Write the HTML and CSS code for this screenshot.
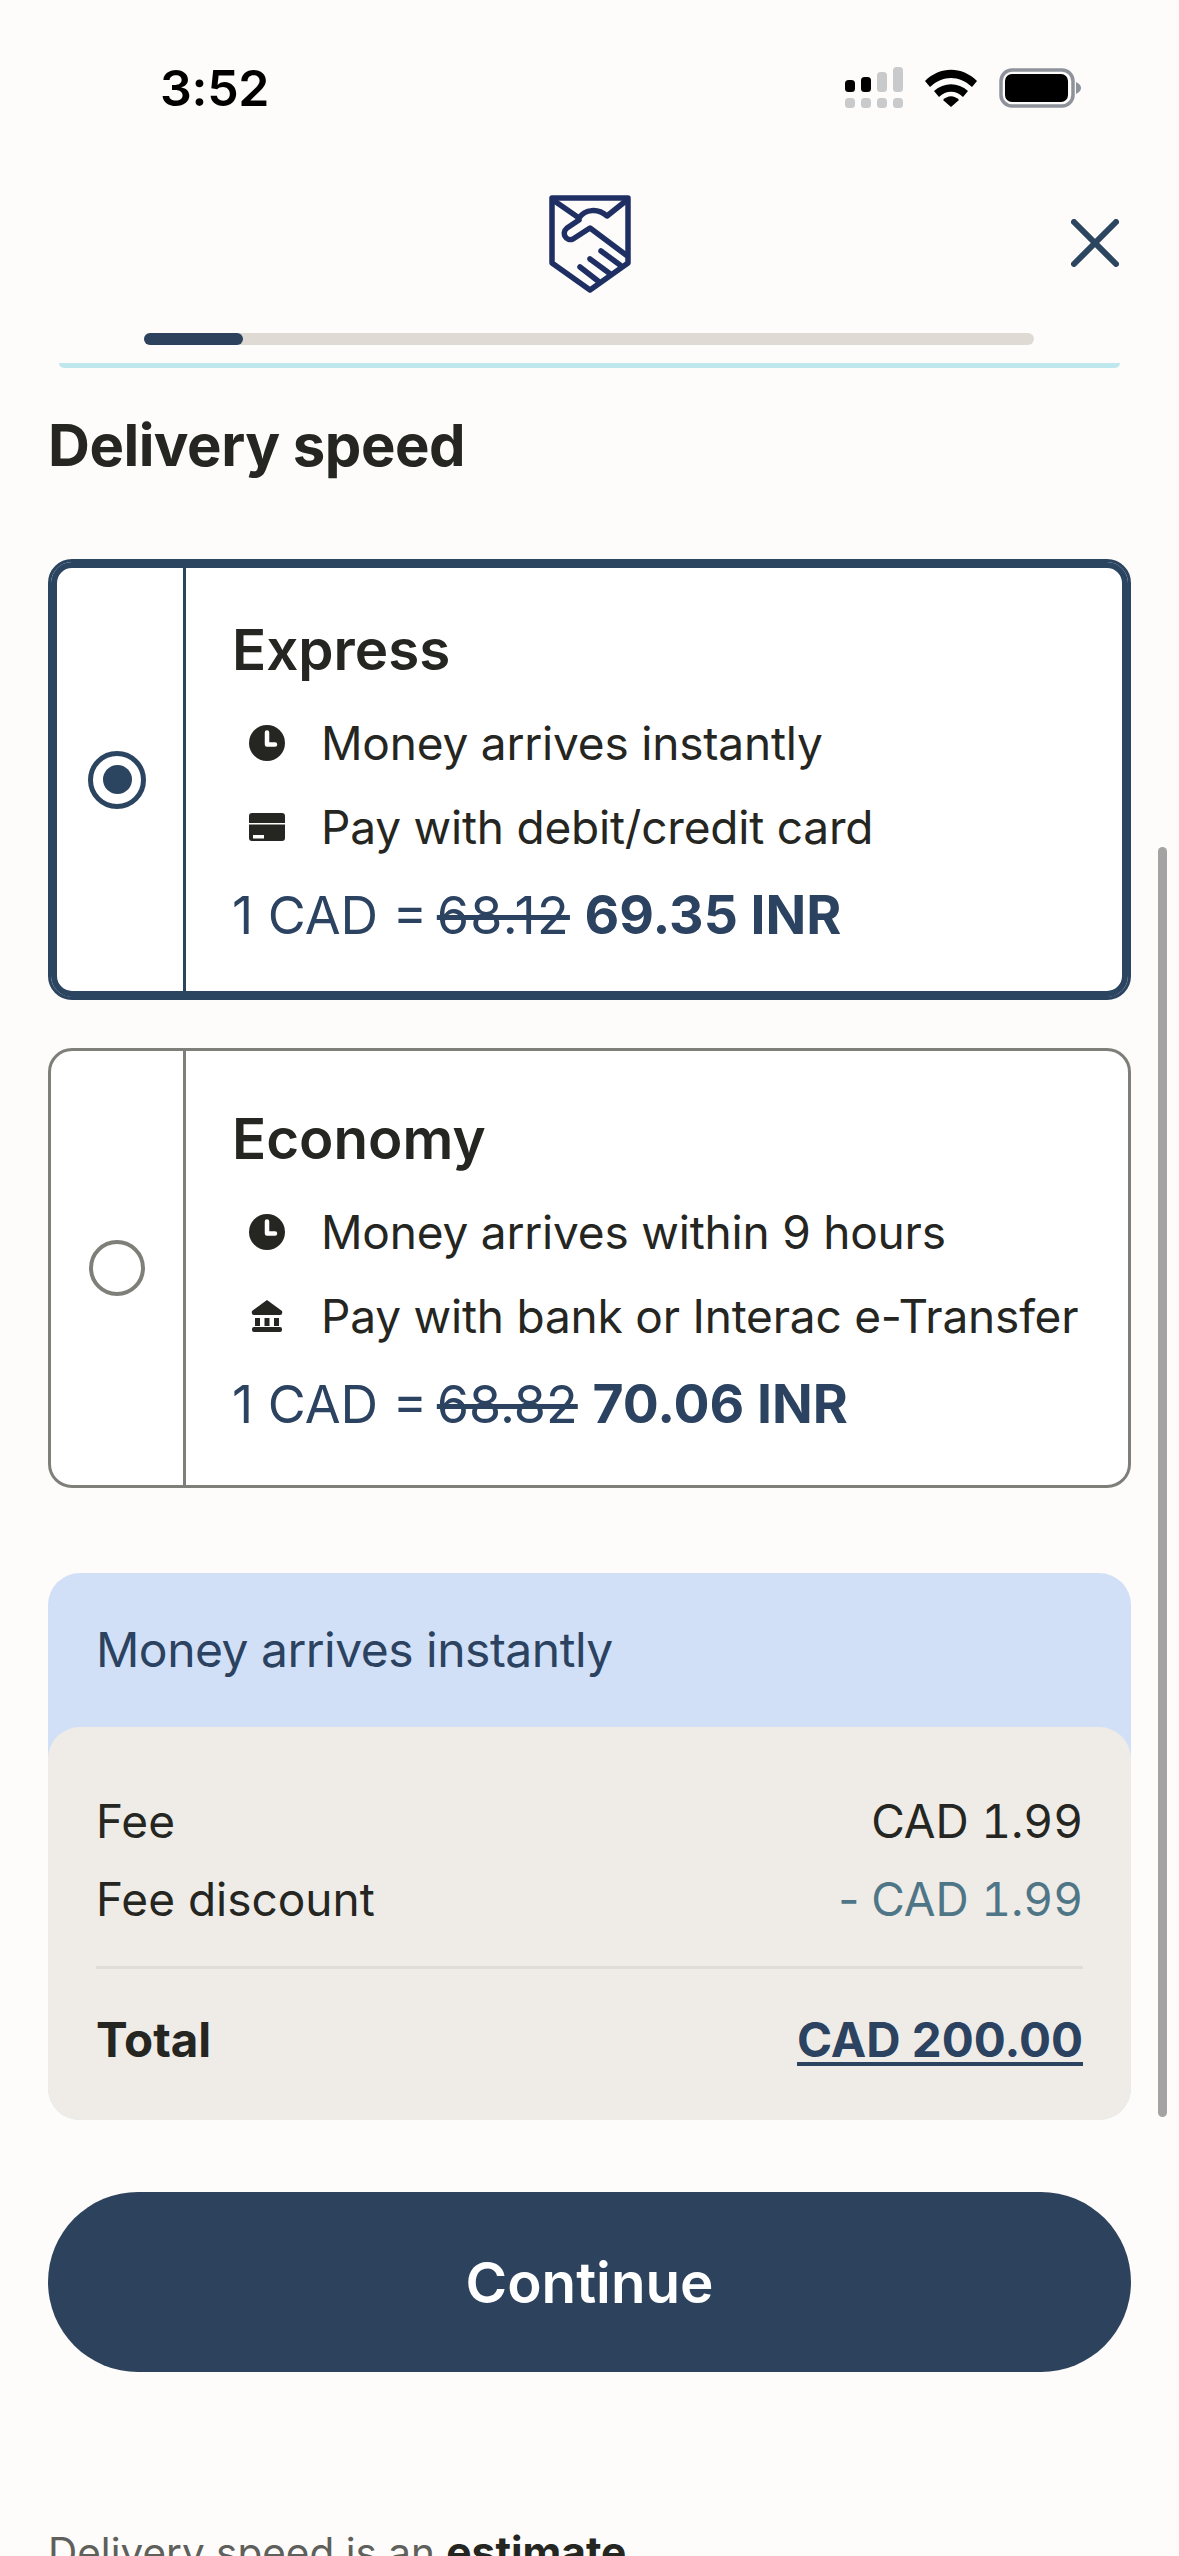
FILE: index.html
```html
<!DOCTYPE html>
<html lang="en">
<head>
    <meta charset="UTF-8">
    <meta name="viewport" content="width=device-width, initial-scale=1.0">
    <title>Delivery speed</title>
    <link rel="stylesheet" href="styles.css">
</head>

<body>
    <div class="scrollbar"></div>

    <header class="status-bar">
        <span class="time">3:52</span>
        <div class="status-icons">
            <svg width="58" height="41" viewBox="0 0 58 41">
                <rect x="0" y="13" width="10" height="12" rx="3.5" fill="#000"/>
                <rect x="16" y="10" width="10" height="15" rx="3.5" fill="#000"/>
                <rect x="32" y="5" width="10" height="20" rx="3.5" fill="#c9cacc"/>
                <rect x="48" y="0" width="10" height="25" rx="3.5" fill="#c9cacc"/>
                <rect x="0" y="31" width="10" height="10" rx="3.5" fill="#c9cacc"/>
                <rect x="16" y="31" width="10" height="10" rx="3.5" fill="#c9cacc"/>
                <rect x="32" y="31" width="10" height="10" rx="3.5" fill="#c9cacc"/>
                <rect x="48" y="31" width="10" height="10" rx="3.5" fill="#c9cacc"/>
            </svg>
            <svg width="52" height="38" viewBox="0 0 52 38">
                <path d="M0 12 C15 -3 37 -3 52 12 L47 18 C34 6 18 6 5 18 Z" fill="#000"/>
                <path d="M9 22 C19 13 33 13 43 22 L38 28 C31 21 21 21 14 28 Z" fill="#000"/>
                <path d="M18 31 C23 26 29 26 34 31 L26 38 Z" fill="#000"/>
            </svg>
            <svg class="battery" width="82" height="40" viewBox="0 0 82 40">
                <rect x="2" y="2" width="72" height="36" rx="11" fill="none" stroke="#8e939b" stroke-width="3.5"/>
                <rect x="6" y="6" width="63" height="28" rx="7" fill="#000"/>
                <path d="M77 14 C81 16 82 18 82 20 C82 22 81 24 77 26 Z" fill="#8e939b"/>
            </svg>
        </div>
    </header>

    <div class="top-nav">
        <svg class="logo" width="82" height="98" viewBox="-1 -1 82 98">
            <g fill="none" stroke="#1f2f63" stroke-width="5.5" stroke-linecap="round" stroke-linejoin="round">
                <path d="M2 2 H78 V67 L40 94 L2 67 Z"/>
                <path d="M3 4 L29 22 C35 13 48 12 57 20 L77 4"/>
                <path d="M29 24 L17 32 C11 37 16 46 23 43 L40 32 L76 59"/>
                <path d="M51 55 L70 69"/>
                <path d="M40 63 L59 77"/>
                <path d="M30 71 L48 85"/>
            </g>
        </svg>
        <svg class="close" width="48" height="48" viewBox="0 0 48 48">
            <path d="M3 3 L45 45 M45 3 L3 45" fill="none" stroke="#2d4660" stroke-width="6" stroke-linecap="round"/>
        </svg>
    </div>

    <div class="progress"><div class="progress-fill"></div></div>
    <div class="prev-card-edge"></div>

    <main class="content">
        <h1>Delivery speed</h1>

        <div class="speed-card selected">
            <div class="radio-col"><span class="radio"></span></div>
            <div class="speed-info">
                <h2>Express</h2>
                <div class="info-row">
                    <svg width="36" height="36" viewBox="0 0 36 36"><circle cx="18" cy="18" r="18" fill="#252622"/><path d="M18 7.500 V19.500 H26" fill="none" stroke="#fff" stroke-width="4.500" stroke-linecap="round" stroke-linejoin="round"/></svg>
                    <span>Money arrives instantly</span>
                </div>
                <div class="info-row">
                    <svg width="36" height="36" viewBox="0 0 36 36"><path d="M3 4 H33 A3 3 0 0 1 36 7 V14 H0 V7 A3 3 0 0 1 3 4 Z M0 15.500 H36 V29 A3 3 0 0 1 33 32 H3 A3 3 0 0 1 0 29 Z" fill="#252622"/><rect x="4" y="26" width="11" height="3.500" fill="#fff"/></svg>
                    <span>Pay with debit/credit card</span>
                </div>
                <p class="rate">1 CAD = <s>68.12</s> <b>69.35 INR</b></p>
            </div>
        </div>

        <div class="speed-card">
            <div class="radio-col"><span class="radio"></span></div>
            <div class="speed-info">
                <h2>Economy</h2>
                <div class="info-row">
                    <svg width="36" height="36" viewBox="0 0 36 36"><circle cx="18" cy="18" r="18" fill="#252622"/><path d="M18 7.500 V19.500 H26" fill="none" stroke="#fff" stroke-width="4.500" stroke-linecap="round" stroke-linejoin="round"/></svg>
                    <span>Money arrives within 9 hours</span>
                </div>
                <div class="info-row">
                    <svg width="36" height="36" viewBox="0 0 36 36"><path d="M18 2 L33 13 Q34 17 31 17 H5 Q2 17 3 13 Z" fill="#252622"/><path d="M6 20 H11 V28 H6 Z M15.500 20 H20.500 V28 H15.500 Z M25 20 H30 V28 H25 Z" fill="#252622"/><rect x="3" y="29" width="30" height="5" rx="2" fill="#252622"/></svg>
                    <span>Pay with bank or Interac e-Transfer</span>
                </div>
                <p class="rate">1 CAD = <s>68.82</s> <b>70.06 INR</b></p>
            </div>
        </div>

        <section class="summary">
            <div class="summary-note">Money arrives instantly</div>
            <div class="summary-body">
                <div class="fee-row"><span>Fee</span><span class="amount">CAD 1.99</span></div>
                <div class="fee-row"><span>Fee discount</span><span class="amount discount"><span class="minus">-</span> CAD 1.99</span></div>
                <div class="total-row"><span>Total</span><a class="total-amount">CAD 200.00</a></div>
            </div>
        </section>

        <button class="btn">Continue</button>

        <p class="footnote">Delivery speed is an <b>estimate</b></p>
    </main>
</body>
</html>
```

FILE: styles.css
```css
* {
    box-sizing: border-box;
}

html, body {
    height: 2556px;
    overflow: hidden;
}

body {
    font-family: 'Inter', 'Liberation Sans', sans-serif;
    margin: 0;
    padding: 0;
    background-color: #fdfcfa;
    color: #252622;
    position: relative;
}

.scrollbar {
    position: absolute;
    top: 847px;
    right: 12px;
    width: 9px;
    height: 1270px;
    border-radius: 5px;
    background: #a3a3a3;
}

.status-bar {
    height: 195px;
    padding: 60px 98px 0 160px;
    display: flex;
    justify-content: space-between;
    align-items: flex-start;
}

.time {
    font-size: 50px;
    font-weight: 600;
    letter-spacing: -0.3px;
    line-height: 56px;
    color: #000;
}

.status-icons {
    display: flex;
    align-items: center;
    gap: 22px;
    padding-top: 7px;
}

.top-nav {
    height: 96px;
    position: relative;
    display: flex;
    justify-content: center;
}

.close {
    position: absolute;
    right: 60px;
    top: 24px;
}

.progress {
    margin: 42px 145px 0 144px;
    height: 12px;
    border-radius: 6px;
    background: #dfdbd4;
}

.progress-fill {
    width: 99px;
    height: 12px;
    border-radius: 6px;
    background: #2d425c;
}

.prev-card-edge {
    margin: 18px 59px 0;
    height: 5px;
    background: #bfe8ee;
    border-radius: 0 0 10px 10px;
}

.content {
    padding: 0 48px;
}

h1 {
    margin: 43px 0 80px;
    font-size: 58px;
    font-weight: 700;
    letter-spacing: -0.5px;
    line-height: 68px;
}

.speed-card {
    height: 440px;
    margin-bottom: 48px;
    display: flex;
    background: #fff;
    border: 3px solid #7f7f7a;
    border-radius: 24px;
}

.speed-card.selected {
    height: 441px;
    border-color: #2b4460;
    box-shadow: inset 0 0 0 6px #2b4460;
}

.radio-col {
    width: 135px;
    flex-shrink: 0;
    display: flex;
    align-items: center;
    justify-content: center;
    border-right: 3px solid #7f7f7a;
}

.selected .radio-col {
    border-right-color: #2b4460;
}

.radio {
    width: 56px;
    height: 56px;
    border: 4px solid #7f7f7a;
    border-radius: 50%;
    display: flex;
    align-items: center;
    justify-content: center;
}

.selected .radio {
    width: 58px;
    height: 58px;
    border: 5px solid #2b4460;
}

.selected .radio::after {
    content: "";
    width: 29px;
    height: 29px;
    border-radius: 50%;
    background: #2b4460;
}

.speed-info {
    padding: 53px 0 0 46px;
}

h2 {
    margin: 0 0 16px;
    font-size: 56.500px;
    font-weight: 600;
    line-height: 70px;
}

.info-row {
    height: 84px;
    padding-left: 17px;
    display: flex;
    align-items: center;
    gap: 36px;
    font-size: 46px;
    letter-spacing: -0.2px;
}

.rate {
    margin: 4px 0 0;
    font-size: 52px;
    line-height: 84px;
    color: #2b4260;
}

.rate s {
    margin-left: -5px;
}

.selected .rate s {
    letter-spacing: 1.3px;
}

.rate b {
    font-size: 53.500px;
    font-weight: 700;
}

.summary {
    margin-top: 85px;
    border-radius: 32px;
    background: #d1e0f7;
}

.summary-note {
    height: 154px;
    padding: 48px 48px 0;
    font-size: 48px;
    letter-spacing: -0.5px;
    line-height: 58px;
    color: #2b4260;
}

.summary-body {
    height: 393px;
    padding: 55px 48px 0;
    border-radius: 32px;
    background: #efece8;
    font-size: 46px;
}

.fee-row {
    display: flex;
    justify-content: space-between;
    line-height: 78px;
}

.amount {
    font-feature-settings: "tnum";
}

.discount {
    color: #4f7686;
}

.minus {
    margin-right: -5px;
}

.total-row {
    display: flex;
    justify-content: space-between;
    margin-top: 28px;
    padding-top: 26px;
    border-top: 3px solid #e0ddd8;
    font-size: 47.500px;
    font-weight: 700;
    line-height: 90px;
}

.total-amount {
    color: #2b4260;
    text-decoration: underline;
    text-decoration-thickness: 4px;
    text-underline-offset: 5px;
}

.btn {
    display: block;
    width: 100%;
    height: 180px;
    margin-top: 72px;
    border: none;
    border-radius: 90px;
    background: #2d425c;
    color: #fff;
    font-family: inherit;
    font-size: 56.500px;
    font-weight: 600;
}

.footnote {
    margin: 151px 0 0;
    font-size: 40.500px;
    line-height: 58px;
    color: #5f5f5b;
}

.footnote b {
    font-size: 42.500px;
    color: #252622;
}
```
